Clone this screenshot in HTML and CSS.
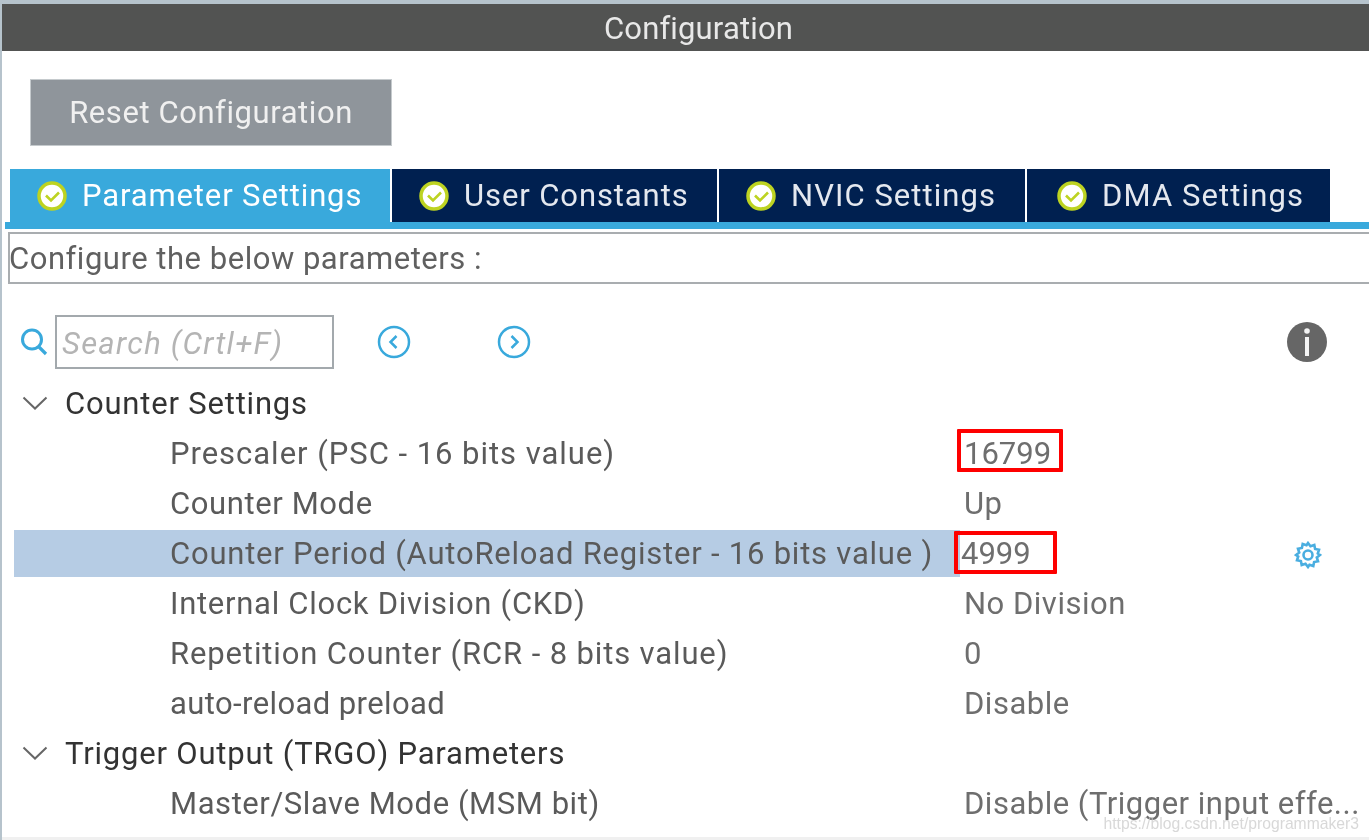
FILE: index.html
```html
<!DOCTYPE html>
<html lang="en">
<head>
<meta charset="utf-8">
<title>Configuration</title>
<link rel="stylesheet" href="styles.css">
</head>
<body>
<div class="panel">
  <header class="title">Configuration</header>
  <div class="toolbar"><button class="reset">Reset Configuration</button></div>
  <nav class="tabs">
    <div class="tab active"><svg class="check" viewBox="0 0 30 30"><circle cx="15" cy="15" r="13" fill="#fff" stroke="#bdd321" stroke-width="3.500"/><path d="M9 14.500l5 5 8-8" fill="none" stroke="#bdd321" stroke-width="2.600"/></svg><span>Parameter Settings</span></div>
    <div class="tab w2"><svg class="check" viewBox="0 0 30 30"><circle cx="15" cy="15" r="13" fill="#fff" stroke="#bdd321" stroke-width="3.500"/><path d="M9 14.500l5 5 8-8" fill="none" stroke="#bdd321" stroke-width="2.600"/></svg><span>User Constants</span></div>
    <div class="tab w3"><svg class="check" viewBox="0 0 30 30"><circle cx="15" cy="15" r="13" fill="#fff" stroke="#bdd321" stroke-width="3.500"/><path d="M9 14.500l5 5 8-8" fill="none" stroke="#bdd321" stroke-width="2.600"/></svg><span>NVIC Settings</span></div>
    <div class="tab w4"><svg class="check" viewBox="0 0 30 30"><circle cx="15" cy="15" r="13" fill="#fff" stroke="#bdd321" stroke-width="3.500"/><path d="M9 14.500l5 5 8-8" fill="none" stroke="#bdd321" stroke-width="2.600"/></svg><span>DMA Settings</span></div>
  </nav>
  <div class="tabline"></div>
  <div class="desc">Configure the below parameters :</div>
  <div class="searchbar">
    <svg class="mag" viewBox="0 0 28 30"><circle cx="12" cy="12.500" r="9.500" fill="none" stroke="#39a9dc" stroke-width="3"/><path d="M18.500 19.500l7.500 7.500" stroke="#39a9dc" stroke-width="3.200"/></svg>
    <div class="search">Search (Crtl+F)</div>
    <svg class="nav prev" viewBox="0 0 34 34"><circle cx="17" cy="17" r="15" fill="none" stroke="#39a9dc" stroke-width="2.500"/><path d="M19.500 11l-6 6 6 6" fill="none" stroke="#39a9dc" stroke-width="2.500"/></svg>
    <svg class="nav next" viewBox="0 0 34 34"><circle cx="17" cy="17" r="15" fill="none" stroke="#39a9dc" stroke-width="2.500"/><path d="M14.500 11l6 6-6 6" fill="none" stroke="#39a9dc" stroke-width="2.500"/></svg>
    <svg class="info" viewBox="0 0 40 40"><circle cx="20" cy="20" r="20" fill="#666"/><circle cx="20" cy="9" r="2.800" fill="#f4f4f4"/><rect x="18" y="15" width="4" height="19" fill="#f4f4f4"/></svg>
  </div>
  <div class="tree">
    <div class="group"><svg class="chev" viewBox="0 0 26 14"><path d="M1.500 1.500l11.500 11 11.500-11" fill="none" stroke="#666" stroke-width="2"/></svg><span>Counter Settings</span></div>
    <div class="row"><span class="name n-psc">Prescaler (PSC - 16 bits value)</span><span class="cell"><span class="val digits">16799</span><i class="mark m1"></i></span></div>
    <div class="row"><span class="name n-mode">Counter Mode</span><span class="val">Up</span></div>
    <div class="row sel"><span class="name">Counter Period (AutoReload Register - 16 bits value )</span><span class="cell c4999"><span class="val digits">4999</span><i class="mark m2"></i></span>
      <svg class="gear" viewBox="0 0 28 28"><path d="M14 2l2.500 3.200 3.800-1.200.8 3.900 3.900.8-1.200 3.800L26 14l-3.200 2.500 1.200 3.800-3.900.8-.8 3.900-3.800-1.200L14 26l-2.500-3.200-3.800 1.200-.8-3.900-3.900-.8 1.200-3.800L2 14l3.200-2.500L4 7.700l3.900-.8.800-3.900 3.800 1.200z" fill="none" stroke="#4aaee0" stroke-width="2.600"/><circle cx="14" cy="14" r="4.500" fill="none" stroke="#4aaee0" stroke-width="2.600"/></svg></div>
    <div class="row"><span class="name n-ckd">Internal Clock Division (CKD)</span><span class="val">No Division</span></div>
    <div class="row"><span class="name n-rcr">Repetition Counter (RCR - 8 bits value)</span><span class="val">0</span></div>
    <div class="row"><span class="name n-arp">auto-reload preload</span><span class="val">Disable</span></div>
    <div class="group"><svg class="chev" viewBox="0 0 26 14"><path d="M1.500 1.500l11.500 11 11.500-11" fill="none" stroke="#666" stroke-width="2"/></svg><span>Trigger Output (TRGO) Parameters</span></div>
    <div class="row"><span class="name n-msm">Master/Slave Mode (MSM bit)</span><span class="val">Disable (Trigger input effe...</span></div>
  </div>
  <div class="watermark">https://blog.csdn.net/programmaker3</div>
</div>
</body>
</html>
```
FILE: styles.css
```css
* { box-sizing: border-box; }
html, body { margin: 0; padding: 0; }
body {
  width: 1369px;
  height: 840px;
  overflow: hidden;
  background: #fff;
  font-family: Roboto, "Liberation Sans", sans-serif;
  font-size: 31px;
  letter-spacing: 0.78px;
  color: #6a6a6a;
}
.panel {
  position: relative;
  width: 1369px;
  height: 840px;
  padding: 4px 0 0 2px;
  background: #fff;
  box-shadow: inset 2px 4px 0 #b6c3cc, inset 0 -3px 0 #f0f0f0;
  overflow: hidden;
}
/* the reference is an upscaled capture: text and icons are soft, the red marks are not */
.title, .reset, .tab span, .check, .desc, .mag, .search, .nav, .info, .chev, .group span, .name, .val, .gear, .watermark {
  filter: blur(0.6px);
}
.title {
  height: 47px;
  background: #525352;
  color: #e8e8e8;
  text-align: center;
  line-height: 49px;
  padding-left: 26px;
  letter-spacing: 0.15px;
}
.toolbar { padding: 28px 0 0 28px; height: 118px; }
.reset {
  display: block;
  width: 362px;
  height: 67px;
  border: 1px solid #c5cacd;
  background: #8f959b;
  color: #f0f0f0;
  font: inherit;
  letter-spacing: 0.57px;
  padding: 0;
}
.tabs { display: flex; padding-left: 8px; height: 53px; gap: 2px; }
.tab {
  display: flex;
  align-items: center;
  height: 53px;
  padding-left: 27px;
  background: #002050;
  color: #e4e8ef;
}
.tab.active { width: 380px; background: #39a9dc; color: #fff; letter-spacing: 0.87px; }
.tab.w2 { width: 325px; letter-spacing: 0.9px; }
.tab.w3 { width: 306px; letter-spacing: 1.05px; }
.tab.w4 { width: 303px; padding-left: 30px; letter-spacing: 1.1px; }
.check { width: 30px; height: 30px; margin-right: 15px; flex: none; }
.tabline { height: 7px; background: #39a9dc; margin-left: 3px; }
.desc {
  margin: 3px 0 0 6px;
  height: 52px;
  border: 2px solid #a9adb0;
  border-right: 0;
  line-height: 50px;
  text-indent: -1px;
  letter-spacing: 0.52px;
  color: #606060;
}
.searchbar {
  display: flex;
  align-items: center;
  height: 54px;
  margin-top: 31px;
  padding-left: 18px;
}
.mag { width: 28px; height: 30px; flex: none; }
.search {
  width: 279px;
  height: 54px;
  margin-left: 7px;
  border: 2px solid #a3a9ad;
  font-style: italic;
  color: #b4b4b4;
  line-height: 53px;
  padding-left: 5px;
  letter-spacing: 1.27px;
}
.nav { width: 34px; height: 34px; flex: none; }
.prev { margin-left: 43px; }
.next { margin-left: 86px; }
.info { width: 40px; height: 40px; margin-left: 756px; flex: none; }
.tree { margin-top: 9px; }
.group {
  display: flex;
  align-items: center;
  height: 50px;
  padding-left: 20px;
  color: #333;
  letter-spacing: 0.8px;
}
.chev { width: 26px; height: 14px; margin-right: 17px; flex: none; }
.row {
  position: relative;
  display: flex;
  align-items: center;
  height: 50px;
  padding-left: 168px;
}
.row.sel::before {
  content: "";
  position: absolute;
  left: 12px;
  top: 2px;
  width: 946px;
  height: 47px;
  background: #b6cce4;
}
.name { position: relative; width: 794px; flex: none; white-space: nowrap; color: #5a5a5a; }
.n-psc { letter-spacing: 0.97px; }
.n-mode { letter-spacing: 0.6px; }
.n-ckd { letter-spacing: 0.72px; }
.n-rcr { letter-spacing: 0.87px; }
.n-arp { letter-spacing: 0.4px; }
.n-msm { letter-spacing: 0.57px; }
.cell { position: relative; display: block; }
.c4999 { margin-left: -3px; }
.val { display: block; white-space: nowrap; color: #6e6e6e; letter-spacing: 0.5px; }
.digits { letter-spacing: 0; }
.mark {
  position: absolute;
  border: 4px solid #fe0000;
  border-radius: 1px;
}
.m1 { left: -7px; top: -6px; width: 106px; height: 43px; }
.m2 { left: -7px; top: -4px; width: 103px; height: 43px; }
.gear { position: absolute; left: 1292px; top: 13px; width: 28px; height: 28px; }
.watermark {
  position: absolute;
  right: 10px;
  bottom: 7px;
  font-family: "Liberation Sans", sans-serif;
  font-size: 15.700px;
  letter-spacing: 0;
  color: rgba(200,200,200,.7);
}
```
